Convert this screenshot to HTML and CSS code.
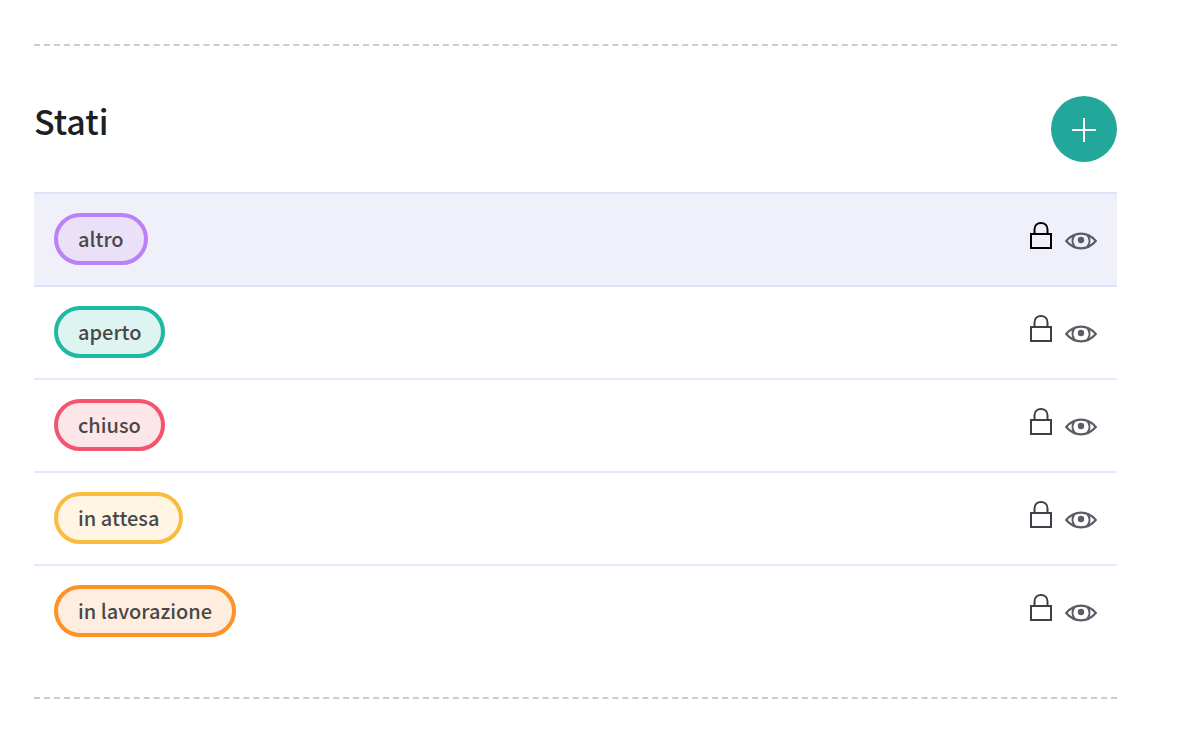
FILE: index.html
```html
<!DOCTYPE html>
<html lang="it">
<head>
    <meta charset="UTF-8">
    <meta name="viewport" content="width=device-width, initial-scale=1.0">
    <title>Stati</title>
    <link rel="stylesheet" href="styles.css">
</head>
<body>
    <!-- icone condivise dalle righe -->
    <svg class="sprite" aria-hidden="true">
        <symbol id="lock" viewBox="0 0 22 28">
            <path d="M1 12H21V26H1Z M4.500 12V7.500C4.500 3.500 7.200 1 11 1S17.500 3.500 17.500 7.500V12" fill="none" stroke="currentColor" stroke-width="2"/>
        </symbol>
        <symbol id="eye" viewBox="0 0 32 18">
            <path d="M1.200 9C5.500 4 10.500 1.700 16 1.700S26.500 4 30.800 9C26.500 14 21.500 16.300 16 16.300S5.500 14 1.200 9Z" fill="none" stroke="currentColor" stroke-width="2.200"/>
            <path d="M9.600 3.200C6.900 6.600 6.900 11.400 9.600 14.800M22.400 3.200C25.100 6.600 25.100 11.400 22.400 14.800" fill="none" stroke="currentColor" stroke-width="2.100"/>
            <circle cx="16" cy="8" r="3.200" fill="currentColor"/>
        </symbol>
    </svg>

    <section class="section">
        <div class="head">
            <h2>Stati</h2>
            <button type="button" class="add" aria-label="Aggiungi stato">
                <svg width="24" height="24" viewBox="0 0 24 24"><path d="M12 0V24M0 12H24" stroke="#fff" stroke-width="2"/></svg>
            </button>
        </div>
        <ul class="list">
            <li class="row active">
                <span class="tag purple">altro</span>
                <div class="actions">
                    <button type="button" class="lock" aria-label="Blocca altro"><svg><use href="#lock"/></svg></button>
                    <button type="button" class="eye" aria-label="Mostra altro"><svg><use href="#eye"/></svg></button>
                </div>
            </li>
            <li class="row">
                <span class="tag green">aperto</span>
                <div class="actions">
                    <button type="button" class="lock" aria-label="Blocca aperto"><svg><use href="#lock"/></svg></button>
                    <button type="button" class="eye" aria-label="Mostra aperto"><svg><use href="#eye"/></svg></button>
                </div>
            </li>
            <li class="row">
                <span class="tag red">chiuso</span>
                <div class="actions">
                    <button type="button" class="lock" aria-label="Blocca chiuso"><svg><use href="#lock"/></svg></button>
                    <button type="button" class="eye" aria-label="Mostra chiuso"><svg><use href="#eye"/></svg></button>
                </div>
            </li>
            <li class="row">
                <span class="tag yellow">in attesa</span>
                <div class="actions">
                    <button type="button" class="lock" aria-label="Blocca in attesa"><svg><use href="#lock"/></svg></button>
                    <button type="button" class="eye" aria-label="Mostra in attesa"><svg><use href="#eye"/></svg></button>
                </div>
            </li>
            <li class="row">
                <span class="tag orange">in lavorazione</span>
                <div class="actions">
                    <button type="button" class="lock" aria-label="Blocca in lavorazione"><svg><use href="#lock"/></svg></button>
                    <button type="button" class="eye" aria-label="Mostra in lavorazione"><svg><use href="#eye"/></svg></button>
                </div>
            </li>
        </ul>
    </section>
</body>
</html>
```
FILE: styles.css
```css
*{
    box-sizing: border-box;
}
body{
    margin: 0;
    padding: 44px 61px 32px 34px;
    background-color: #fff;
    font-family: "Noto Sans CJK SC", "Open Sans", sans-serif;
}
button{
    padding: 0;
    border: 0;
    background: none;
    cursor: pointer;
}
svg{
    display: block;
}
.sprite{
    display: none;
}
.section{
    padding: 50px 0 40px;
    border-top: 2px dashed #ccc;
    border-bottom: 2px dashed #ccc;
}
.head{
    display: flex;
    justify-content: space-between;
    align-items: flex-start;
    margin-bottom: 30px;
}
h2{
    margin: 0;
    font-size: 34px;
    font-weight: 500;
    line-height: 50px;
    color: #1c2024;
}
.add{
    display: flex;
    align-items: center;
    justify-content: center;
    width: 66px;
    height: 66px;
    padding-top: 2px;
    border-radius: 50%;
    background-color: #24a79b;
}
.list{
    margin: 0;
    padding: 0;
    list-style: none;
}
.row{
    display: flex;
    justify-content: space-between;
    align-items: center;
    padding: 19px 20px 20px;
    border-top: 2px solid #e6e9fc;
}
.row.active{
    background-color: #f0f0fa;
    border-color: #dfe1fa;
}
.row.active + .row{
    border-color: #dfe1fa;
}
.tag{
    padding: 0 20px;
    border: 4px solid;
    border-radius: 26px;
    font-size: 20px;
    font-weight: 500;
    line-height: 44px;
}
.purple{
    border-color: #bd80f7;
    background-color: #eae0f7;
}
.green{
    border-color: #1eb8a3;
    background-color: #ddf4f0;
}
.red{
    border-color: #f3546f;
    background-color: #fde6e9;
}
.yellow{
    border-color: #f9bc3d;
    background-color: #fff5e2;
}
.orange{
    border-color: #ff9226;
    background-color: #ffeee0;
}
.tag{
    color: #484848;
}
.actions{
    display: flex;
    align-items: flex-end;
    gap: 13px;
    padding-bottom: 6px;
}
.lock{
    color: #3f3f47;
}
.active .lock{
    color: #000;
}
.lock svg{
    width: 22px;
    height: 28px;
}
.eye{
    color: #5c5c66;
}
.eye svg{
    width: 32px;
    height: 18px;
}
```
